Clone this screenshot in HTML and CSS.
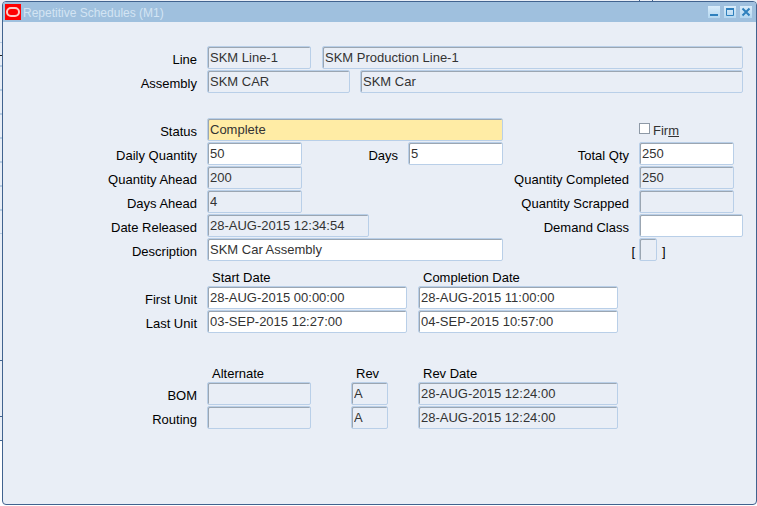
FILE: index.html
```html
<!DOCTYPE html>
<html lang="en">
<head>
<meta charset="utf-8">
<title>Repetitive Schedules (M1)</title>
<link rel="stylesheet" href="styles.css">
</head>
<body>
<svg class="backdrop" aria-hidden="true">
  <rect width="757" height="440" fill="#e9eef6"/>
  <g fill="#b9cde2">
    <rect y="42" width="3" height="1"/><rect y="65" width="3" height="2"/><rect y="89" width="3" height="2"/>
    <rect y="113" width="3" height="2"/><rect y="137" width="3" height="2"/><rect y="161" width="3" height="2"/>
    <rect y="185" width="3" height="2"/><rect y="209" width="3" height="2"/><rect y="233" width="3" height="1"/>
  </g>
  <g fill="#41638f">
    <rect y="55" width="3" height="1" fill="#222"/><rect y="360" width="3" height="1"/>
    <rect y="416" width="3" height="1"/><rect y="440" width="3" height="1"/>
    <rect x="639" width="1" height="1"/><rect x="652" width="1" height="1"/>
  </g>
</svg>
<main class="window">
  <header class="titlebar">
    <svg class="logo" viewBox="0 0 16 16" aria-hidden="true">
      <rect width="16" height="16" fill="#f00"/>
      <rect x="2" y="4" width="12" height="8" rx="4" fill="none" stroke="#ffc9c4" stroke-width="2"/>
    </svg>
    <h1 class="title">Repetitive Schedules (M1)</h1>
    <div class="controls">
      <button type="button" aria-label="Minimize"><svg viewBox="0 0 12 12"><path d="M2 9h8" stroke-width="2"/></svg></button>
      <button type="button" aria-label="Maximize"><svg viewBox="0 0 12 12"><path d="M2 3h8" stroke-width="2"/><path d="M2.500 3v6.500h7v-6.500"/></svg></button>
      <button type="button" aria-label="Close"><svg viewBox="0 0 12 12"><path d="M2.500 2.500l7 7M9.500 2.500l-7 7" stroke-width="2"/></svg></button>
    </div>
  </header>
  <form class="content">
    <section class="rows">
      <div class="row"><label class="label" for="line">Line</label><input id="line" class="w-code" value="SKM Line-1" readonly><input class="grow after-code" aria-label="Line description" value="SKM Production Line-1" readonly></div>
      <div class="row"><label class="label" for="assembly">Assembly</label><input id="assembly" class="w-assembly" value="SKM CAR" readonly><input class="grow" aria-label="Assembly description" value="SKM Car" readonly></div>
    </section>

    <section class="details">
      <div class="rows">
        <div class="row"><label class="label" for="status">Status</label><input id="status" class="w-full required" value="Complete"></div>
        <div class="row"><label class="label" for="daily">Daily Quantity</label><input id="daily" class="w-qty" value="50"><label class="label push" for="days">Days</label><input id="days" class="w-qty" value="5"></div>
        <div class="row"><label class="label" for="qahead">Quantity Ahead</label><input id="qahead" class="w-qty" value="200" readonly></div>
        <div class="row"><label class="label" for="dahead">Days Ahead</label><input id="dahead" class="w-qty" value="4" readonly></div>
        <div class="row"><label class="label" for="released">Date Released</label><input id="released" class="w-stamp" value="28-AUG-2015 12:34:54" readonly></div>
        <div class="row"><label class="label" for="description">Description</label><input id="description" class="w-full" value="SKM Car Assembly"></div>
      </div>
      <div class="rows totals">
        <div class="row"><span class="spacer"></span><label class="check"><input type="checkbox">Fir<u>m</u></label></div>
        <div class="row"><label class="label" for="total">Total Qty</label><div class="cell"><input id="total" class="w-qty" value="250"></div></div>
        <div class="row"><label class="label" for="completed">Quantity Completed</label><div class="cell"><input id="completed" class="w-qty" value="250" readonly></div></div>
        <div class="row"><label class="label" for="scrapped">Quantity Scrapped</label><div class="cell"><input id="scrapped" class="w-qty" readonly></div></div>
        <div class="row"><label class="label" for="demand">Demand Class</label><div class="cell"><input id="demand" class="w-code"></div></div>
        <div class="row flexfield"><span class="label">[</span><div class="cell"><input class="w-flex" aria-label="Descriptive flexfield" readonly><span>]</span></div></div>
      </div>
    </section>

    <table class="units">
      <thead><tr><td></td><th scope="col">Start Date</th><th scope="col">Completion Date</th></tr></thead>
      <tbody>
        <tr><th scope="row">First Unit</th><td><input class="w-date" aria-label="First unit start date" value="28-AUG-2015 00:00:00"></td><td><input class="w-date" aria-label="First unit completion date" value="28-AUG-2015 11:00:00"></td></tr>
        <tr><th scope="row">Last Unit</th><td><input class="w-date" aria-label="Last unit start date" value="03-SEP-2015 12:27:00"></td><td><input class="w-date" aria-label="Last unit completion date" value="04-SEP-2015 10:57:00"></td></tr>
      </tbody>
    </table>

    <table class="revisions">
      <thead><tr><td></td><th scope="col">Alternate</th><th scope="col">Rev</th><th scope="col">Rev Date</th></tr></thead>
      <tbody>
        <tr><th scope="row">BOM</th><td><input class="w-code" aria-label="BOM alternate" readonly></td><td><input class="w-rev" aria-label="BOM revision" value="A" readonly></td><td><input class="w-date" aria-label="BOM revision date" value="28-AUG-2015 12:24:00" readonly></td></tr>
        <tr><th scope="row">Routing</th><td><input class="w-code" aria-label="Routing alternate" readonly></td><td><input class="w-rev" aria-label="Routing revision" value="A" readonly></td><td><input class="w-date" aria-label="Routing revision date" value="28-AUG-2015 12:24:00" readonly></td></tr>
      </tbody>
    </table>
  </form>
</main>
</body>
</html>
```

FILE: styles.css
```css
* { box-sizing: border-box; }

body {
  margin: 0;
  min-height: 100vh;
  padding: 1px 0 1px 2px;
  display: flex;
  background: #fff;
  color: #000;
  font: 13px/16px "Liberation Sans", Arial, sans-serif;
}

.backdrop {
  position: absolute;
  inset: 0;
  z-index: -1;
  width: 100%;
  height: 100%;
}

.window {
  flex: 1;
  min-width: 0;
  border: 1px solid #41638f;
  border-radius: 4px;
  background: #e9eef6;
  overflow: hidden;
}

.titlebar {
  display: flex;
  align-items: center;
  height: 20px;
  padding: 0 4px 0 2px;
  background: #9fc0de;
}

.logo { width: 16px; height: 16px; }

.title {
  flex: 1;
  margin: 0 0 0 2px;
  padding-top: 2px;
  color: #d3e4f3;
  font-size: 12px;
  font-weight: normal;
}

.controls { display: flex; gap: 4px; }

.controls button {
  width: 12px;
  height: 12px;
  padding: 0;
  border: 0;
  background: linear-gradient(#d9ecfa, #b4d7f0);
}

.controls svg {
  display: block;
  width: 12px;
  height: 12px;
  fill: none;
  stroke: #2f80bd;
}

.content { padding: 24px 13px 0 0; }

.rows {
  display: flex;
  flex-direction: column;
  gap: 1px;
}

.row { display: flex; height: 23px; gap: 10px; }

.label {
  flex: none;
  width: 194px;
  padding-top: 6px;
  text-align: right;
}

.label.push { width: auto; margin-left: auto; }

input {
  font: inherit;
  color: #333;
}

input:not([type="checkbox"]) {
  display: block;
  height: 23px;
  min-width: 0;
  margin: 0;
  padding: 0 2px;
  border: 1px solid #b9cfe8;
  border-radius: 2px;
  background: #fff;
  box-shadow: inset 1px 1px #9ba6b2;
  outline: 0;
}

input:not([type="checkbox"]):read-only { background: #e9eef6; }
input.required:not([type="checkbox"]) { background: #ffeca5; }

.grow { flex: 1; }
.after-code { margin-left: 1px !important; }
.w-code { width: 104px; }
.w-assembly { width: 143px; }
.w-full { width: 296px; }
.w-qty { width: 95px; }
.w-stamp { width: 162px; }
.w-date { width: 200px; }
.w-rev { width: 37px; }
.w-flex { width: 18px; }

.details {
  display: flex;
  justify-content: space-between;
  margin-top: 25px;
}

.totals .label { width: 126px; }
.spacer { width: 126px; }
.cell { display: flex; width: 104px; }
.cell span { padding: 6px 0 0 5px; }
.row.flexfield { gap: 4px; }
.flexfield .label { width: 132px; }

.check {
  display: flex;
  height: 23px;
  padding-top: 5px;
  color: #333;
}

.check input {
  appearance: none;
  width: 11px;
  height: 11px;
  margin: 0 3px 0 0;
  border: 1px solid #8e99a6;
  background: #fff;
}

table { border-collapse: collapse; }
th, td { padding: 0; font-weight: normal; }
thead th { height: 16px; padding-left: 5px; text-align: left; }
tbody tr { height: 24px; }
tbody td { padding-right: 11px; vertical-align: top; }
tbody th { width: 204px; min-width: 204px; padding: 6px 10px 0 0; text-align: right; vertical-align: top; }

.units { margin-top: 9px; }
.revisions { margin-top: 32px; }
.revisions td:nth-child(2) { padding-right: 40px; }
.revisions td:nth-child(3) { padding-right: 30px; }
```
